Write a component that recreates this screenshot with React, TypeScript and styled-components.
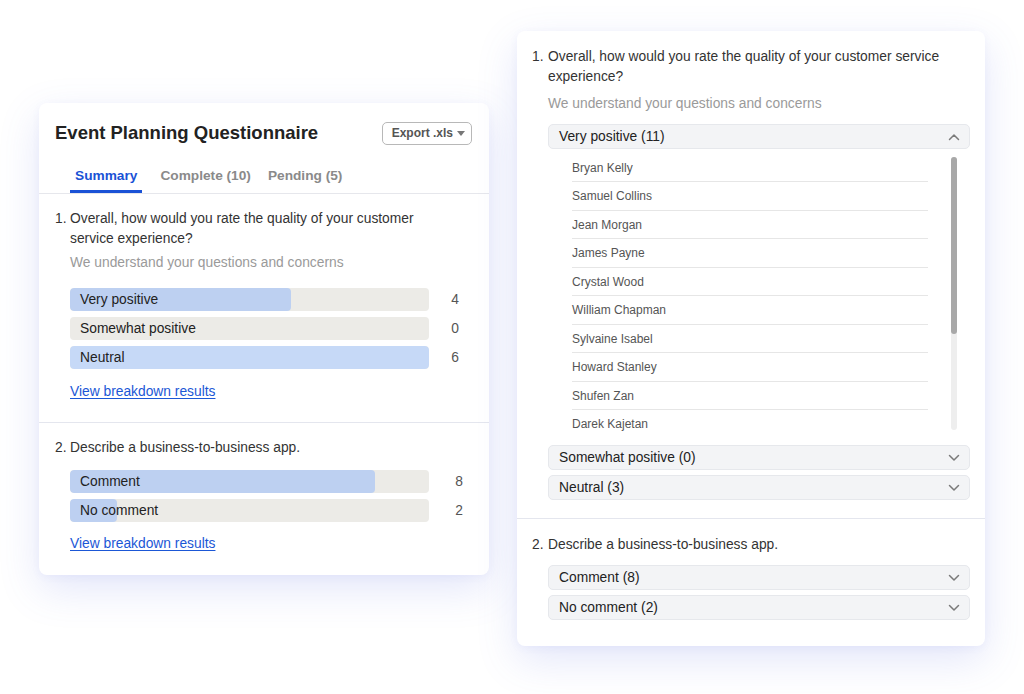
import React from "react";
import styled, { createGlobalStyle } from "styled-components";

const Global = createGlobalStyle`
  html, body { margin: 0; padding: 0; background: #ffffff; }
  body { font-family: "Liberation Sans", Arial, Helvetica, sans-serif; color: #333; }
  * { box-sizing: border-box; }
`;

const TEXT = "13.8px";

const Canvas = styled.main`
  width: 1024px;
  height: 694px;
  overflow: hidden;
  display: flex;
  align-items: flex-start;
  gap: 28px;
  padding: 31px 0 0 39px;
`;

const Card = styled.section<{ $width: number; $offset: number }>`
  width: ${(p) => p.$width}px;
  margin-top: ${(p) => p.$offset}px;
  background: #fff;
  border-radius: 8px;
  box-shadow: 0 14px 40px rgba(86, 106, 228, 0.17), 0 2px 8px rgba(86, 106, 228, 0.06);
`;

const Header = styled.header`
  display: flex;
  align-items: center;
  justify-content: space-between;
  padding: 16px 17px 13px 16px;
`;

const Title = styled.h1`
  margin: 0;
  font-size: 18.5px;
  line-height: 28px;
  font-weight: 700;
  color: #222;
`;

const ExportButton = styled.button`
  display: inline-flex;
  align-items: center;
  gap: 4px;
  height: 23px;
  padding: 0 6px 0 9px;
  border: 1px solid #b8b8b8;
  border-radius: 5px;
  background: #fff;
  font-family: inherit;
  font-size: 12px;
  font-weight: 700;
  color: #555;
`;

const Caret = styled.span`
  width: 0;
  height: 0;
  border-left: 4.5px solid transparent;
  border-right: 4.5px solid transparent;
  border-top: 5.5px solid #777;
`;

const Tabs = styled.nav`
  display: flex;
  gap: 7px;
  padding-left: 31px;
  border-bottom: 1px solid #e6e7ec;
`;

const Tab = styled.div<{ $active?: boolean }>`
  padding: 0 5px;
  height: 33px;
  line-height: 31px;
  font-size: 13.7px;
  font-weight: 700;
  color: ${(p) => (p.$active ? "#1a52d6" : "#8a8a8a")};
  border-bottom: 3px solid ${(p) => (p.$active ? "#1a52d6" : "transparent")};
  &:first-child { margin-right: 6px; }
`;

const Section = styled.div<{ $pad: string; $divider?: boolean }>`
  padding: ${(p) => p.$pad};
  border-top: ${(p) => (p.$divider ? "1px solid #e4e6ee" : "none")};
`;

const Question = styled.div<{ $indent: number; $max: number }>`
  display: grid;
  grid-template-columns: ${(p) => p.$indent}px ${(p) => p.$max}px;
  font-size: ${TEXT};
  line-height: 20px;
  color: #333;
`;

const Body = styled.div<{ $indent: number }>`
  margin-left: ${(p) => p.$indent}px;
`;

const Hint = styled.p<{ $gap: number }>`
  margin: ${(p) => p.$gap}px 0 0 0;
  font-size: ${TEXT};
  line-height: 20px;
  color: #9a9a9a;
`;

const BarList = styled.div<{ $gap: number }>`
  display: flex;
  flex-direction: column;
  gap: 6px;
  margin-top: ${(p) => p.$gap}px;
`;

const BarRow = styled.div`
  display: grid;
  grid-template-columns: 359px 1fr;
  align-items: center;
`;

const Bar = styled.div`
  position: relative;
  height: 23px;
  border-radius: 4px;
  background: #ecebe7;
  overflow: hidden;
`;

const BarFill = styled.div<{ $tone: "mid" | "light" }>`
  position: absolute;
  left: 0;
  top: 0;
  bottom: 0;
  border-radius: 4px;
  background: ${(p) => (p.$tone === "light" ? "#c6d9f7" : "#bdd0f1")};
`;

const BarLabel = styled.span`
  position: relative;
  display: block;
  padding-left: 10px;
  font-size: ${TEXT};
  line-height: 23px;
  color: #222;
`;

const Count = styled.span<{ $shift: number }>`
  text-align: center;
  padding-left: ${(p) => p.$shift}px;
  font-size: ${TEXT};
  color: #555;
`;

const Link = styled.a<{ $gap: number }>`
  display: inline-block;
  margin-top: ${(p) => p.$gap}px;
  font-size: ${TEXT};
  line-height: 20px;
  color: #1b57d6;
  text-decoration: underline;
  text-underline-offset: 2px;
`;

const Accordion = styled.div<{ $gap: number }>`
  display: flex;
  flex-direction: column;
  margin-top: ${(p) => p.$gap}px;
`;

const AccHeader = styled.div<{ $space?: number }>`
  display: flex;
  align-items: center;
  justify-content: space-between;
  height: 25px;
  margin-top: ${(p) => p.$space ?? 0}px;
  padding: 0 9px 0 10px;
  background: #f3f4f6;
  border: 1px solid #e6e8ec;
  border-radius: 5px;
  font-size: ${TEXT};
  color: #222;
`;

const ListWrap = styled.div`
  display: flex;
  gap: 23px;
  padding-left: 24px;
  margin-top: 5px;
`;

const Names = styled.ul`
  list-style: none;
  margin: 0;
  padding: 0;
  width: 356px;
`;

const NameRow = styled.li`
  height: 28.44px;
  line-height: 28px;
  font-size: 12px;
  color: #555;
  border-bottom: 1px solid #e6e6e6;
  &:last-child { border-bottom: none; }
`;

const ScrollTrack = styled.div`
  width: 6px;
  height: 273px;
  margin-top: 3px;
  border-radius: 3px;
  background: #eeeeee;
  display: flex;
`;

const ScrollThumb = styled.div`
  width: 6px;
  height: 177px;
  border-radius: 3px;
  background: #a8a8a8;
`;

const Chevron = ({ up }: { up?: boolean }) => (
  <svg width="12" height="8" viewBox="0 0 12 8" fill="none">
    <polyline
      points={up ? "1.5,6.5 6,2 10.5,6.5" : "1.5,1.5 6,6 10.5,1.5"}
      stroke="#7a7a7a"
      strokeWidth="1.5"
      strokeLinecap="round"
      strokeLinejoin="round"
    />
  </svg>
);

type BarData = { label: string; count: number; pct: number; tone?: "mid" | "light" };

const q1Bars: BarData[] = [
  { label: "Very positive", count: 4, pct: 61.6 },
  { label: "Somewhat positive", count: 0, pct: 0 },
  { label: "Neutral", count: 6, pct: 100, tone: "light" },
];

const q2Bars: BarData[] = [
  { label: "Comment", count: 8, pct: 85 },
  { label: "No comment", count: 2, pct: 13 },
];

const names = [
  "Bryan Kelly",
  "Samuel Collins",
  "Jean Morgan",
  "James Payne",
  "Crystal Wood",
  "William Chapman",
  "Sylvaine Isabel",
  "Howard Stanley",
  "Shufen Zan",
  "Darek Kajetan",
];

const Bars = ({ data, gap, shift }: { data: BarData[]; gap: number; shift: number }) => (
  <BarList $gap={gap}>
    {data.map((b) => (
      <BarRow key={b.label}>
        <Bar>
          <BarFill $tone={b.tone ?? "mid"} style={{ width: `${b.pct}%` }} />
          <BarLabel>{b.label}</BarLabel>
        </Bar>
        <Count $shift={shift}>{b.count}</Count>
      </BarRow>
    ))}
  </BarList>
);

export default function App() {
  return (
    <>
      <Global />
      <Canvas>
        <Card $width={450} $offset={72}>
          <Header>
            <Title>Event Planning Questionnaire</Title>
            <ExportButton>
              Export .xls
              <Caret />
            </ExportButton>
          </Header>
          <Tabs>
            <Tab $active>Summary</Tab>
            <Tab>Complete (10)</Tab>
            <Tab>Pending (5)</Tab>
          </Tabs>
          <Section $pad="15px 8px 20px 16px">
            <Question $indent={15} $max={372}>
              <span>1.</span>
              <span>Overall, how would you rate the quality of your customer service experience?</span>
            </Question>
            <Body $indent={15}>
              <Hint $gap={4}>We understand your questions and concerns</Hint>
              <Bars data={q1Bars} gap={15} shift={0} />
              <Link href="#" $gap={13}>View breakdown results</Link>
            </Body>
          </Section>
          <Section $pad="15px 8px 21px 16px" $divider>
            <Question $indent={15} $max={372}>
              <span>2.</span>
              <span>Describe a business-to-business app.</span>
            </Question>
            <Body $indent={15}>
              <Bars data={q2Bars} gap={12} shift={8} />
              <Link href="#" $gap={12}>View breakdown results</Link>
            </Body>
          </Section>
        </Card>

        <Card $width={468} $offset={0}>
          <Section $pad="16px 15px 18px 15px">
            <Question $indent={16} $max={420}>
              <span>1.</span>
              <span>Overall, how would you rate the quality of your customer service experience?</span>
            </Question>
            <Body $indent={16}>
              <Hint $gap={7}>We understand your questions and concerns</Hint>
              <Accordion $gap={10}>
                <AccHeader>
                  <span>Very positive (11)</span>
                  <Chevron up />
                </AccHeader>
                <ListWrap>
                  <Names>
                    {names.map((n) => (
                      <NameRow key={n}>{n}</NameRow>
                    ))}
                  </Names>
                  <ScrollTrack>
                    <ScrollThumb />
                  </ScrollTrack>
                </ListWrap>
                <AccHeader $space={7}>
                  <span>Somewhat positive (0)</span>
                  <Chevron />
                </AccHeader>
                <AccHeader $space={5}>
                  <span>Neutral (3)</span>
                  <Chevron />
                </AccHeader>
              </Accordion>
            </Body>
          </Section>
          <Section $pad="16px 15px 26px 15px" $divider>
            <Question $indent={16} $max={420}>
              <span>2.</span>
              <span>Describe a business-to-business app.</span>
            </Question>
            <Body $indent={16}>
              <Accordion $gap={10}>
                <AccHeader>
                  <span>Comment (8)</span>
                  <Chevron />
                </AccHeader>
                <AccHeader $space={5}>
                  <span>No comment (2)</span>
                  <Chevron />
                </AccHeader>
              </Accordion>
            </Body>
          </Section>
        </Card>
      </Canvas>
    </>
  );
}
